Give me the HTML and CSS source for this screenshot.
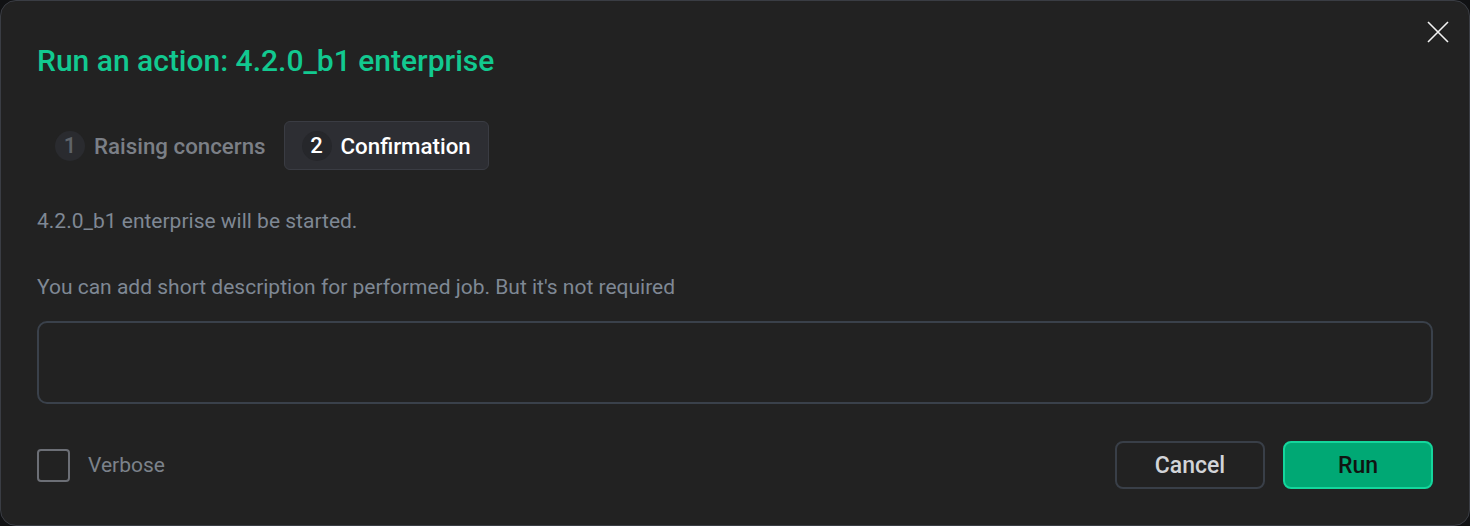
FILE: index.html
```html
<!DOCTYPE html>
<html>
	<head>
		<meta charset="UTF-8">
		<title>Run an action</title>
		<link rel="stylesheet" href="styles.css">
	</head>
	<body>
		<div class="dialog">
			<button class="close" title="Close">
				<svg width="22" height="22" viewBox="0 0 22 22"><path d="M1 1L21 21M21 1L1 21" stroke="#f2f2f2" stroke-width="1.6" fill="none"/></svg>
			</button>
			<h1 class="title">Run an action: 4.2.0_b1 enterprise</h1>
			<div class="steps">
				<div class="step"><span class="num">1</span>Raising concerns</div>
				<div class="step active"><span class="num">2</span>Confirmation</div>
			</div>
			<p class="text first">4.2.0_b1 enterprise will be started.</p>
			<p class="text">You can add short description for performed job. But it's not required</p>
			<textarea class="desc"></textarea>
			<div class="footer">
				<label class="check"><span class="box"></span>Verbose</label>
				<div class="actions">
					<button class="btn cancel">Cancel</button>
					<button class="btn run">Run</button>
				</div>
			</div>
		</div>
	</body>
</html>
```

FILE: styles.css
```css
body {
	margin: 0;
	background: #111214;
	font-family: Roboto, "Liberation Sans", sans-serif;
}

.dialog {
	position: relative;
	box-sizing: border-box;
	width: 1470px;
	height: 526px;
	padding: 42px 36px 0 36px;
	background: #222222;
	border: 1px solid #3a3d44;
	border-radius: 16px;
	display: flex;
	flex-direction: column;
}

.close {
	position: absolute;
	top: 20px;
	right: 20px;
	padding: 0;
	border: 0;
	background: none;
	width: 22px;
	height: 22px;
	cursor: pointer;
}

.title {
	margin: 0;
	font-size: 30px;
	line-height: 36px;
	font-weight: 500;
	color: #12c990;
}

.steps {
	display: flex;
	margin-top: 42px;
}

.step {
	display: flex;
	align-items: center;
	height: 49px;
	box-sizing: border-box;
	padding: 0 17px;
	border: 1px solid transparent;
	border-radius: 6px;
	font-size: 22.3px;
	line-height: 26px;
	font-weight: 500;
	color: #7b7f86;
}

.step .num {
	width: 30px;
	height: 30px;
	border-radius: 50%;
	background: #2a2b2f;
	display: flex;
	align-items: center;
	justify-content: center;
	margin-right: 9px;
	font-size: 22px;
	color: #5f6369;
}

.step.active {
	background: #2d2e33;
	border-color: #3a3c43;
	color: #ffffff;
}

.step.active .num {
	background: #26272b;
	color: #ffffff;
}

.text {
	margin: 42px 0 0 0;
	font-size: 21px;
	line-height: 24px;
	color: #7f8894;
}

.text.first {
	margin-top: 39px;
}

.desc {
	display: block;
	margin-top: 22px;
	height: 83px;
	box-sizing: border-box;
	background: transparent;
	border: 2px solid #3a414b;
	border-radius: 10px;
	resize: none;
	outline: none;
	color: #ddd;
	font: inherit;
}

.footer {
	display: flex;
	align-items: center;
	justify-content: space-between;
	margin-top: 37px;
}

.check {
	display: flex;
	align-items: center;
	font-size: 21px;
	color: #7c828b;
}

.check .box {
	width: 33px;
	height: 33px;
	box-sizing: border-box;
	border: 2px solid #6c6f76;
	border-radius: 4px;
	margin-right: 18px;
}

.actions {
	display: flex;
	gap: 18px;
}

.btn {
	width: 150px;
	height: 48px;
	border-radius: 8px;
	font-family: inherit;
	font-size: 23px;
	font-weight: 500;
	cursor: pointer;
}

.btn.cancel {
	background: transparent;
	border: 2px solid #393f48;
	color: #d2d4d8;
}

.btn.run {
	background: #00a874;
	border: 2px solid #14d69c;
	color: #101412;
}
```
